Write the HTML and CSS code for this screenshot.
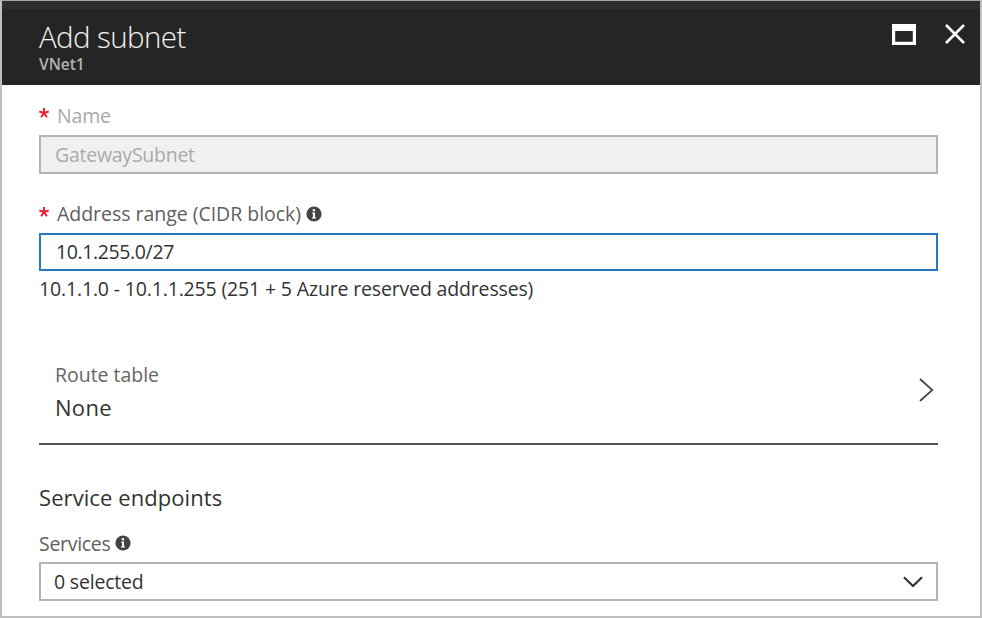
FILE: index.html
```
<!DOCTYPE html>
<html lang="en">
<head>
<meta charset="utf-8">
<title>Add subnet</title>
<link rel="stylesheet" href="styles.css">
</head>
<body>
<main class="blade">
  <header class="header">
    <div>
      <h1 class="title">Add subnet</h1>
      <div class="subtitle">VNet1</div>
    </div>
    <div class="actions">
      <svg width="24" height="21" viewBox="0 0 24 21"><path fill="#fff" fill-rule="evenodd" d="M0 0H24V21H0ZM3.2 7V17.8H20.8V7Z"/></svg>
      <svg width="20" height="20" viewBox="0 0 20 20"><path d="M1 1L19 19M19 1L1 19" stroke="#fff" stroke-width="2.6"/></svg>
    </div>
  </header>
  <section class="form">
    <div class="label muted"><svg class="star" width="10" height="10" viewBox="0 0 10 10"><path d="M5 5V0M5 5L.3 3.5M5 5L9.7 3.5M5 5L2.1 9.3M5 5L7.9 9.3"/></svg><span class="t-name">Name</span></div>
    <div class="input disabled"><span class="t-gateway">GatewaySubnet</span></div>
    <div class="label address"><svg class="star" width="10" height="10" viewBox="0 0 10 10"><path d="M5 5V0M5 5L.3 3.5M5 5L9.7 3.5M5 5L2.1 9.3M5 5L7.9 9.3"/></svg><span class="t-address">Address range (CIDR block)</span><svg class="info" width="16" height="16" viewBox="0 0 16 16"><circle cx="8" cy="8" r="7.6" fill="#444"/><path d="M6.2 6.5H9V11.2H10V12.5H6V11.2H7V7.8H6.2ZM6.7 3.3H9.1V5.3H6.7Z" fill="#fff"/></svg></div>
    <div class="input focused"><span class="t-range">10.1.255.0/27</span></div>
    <div class="hint"><span class="t-hint">10.1.1.0 - 10.1.1.255 (251 + 5 Azure reserved addresses)</span></div>
    <div class="route">
      <div>
        <div class="route-label"><span class="t-route">Route table</span></div>
        <div class="route-value"><span class="t-none">None</span></div>
      </div>
      <svg class="chevron" width="15" height="24" viewBox="0 0 15 24"><path d="M1 1L13.3 12L1 23" fill="none" stroke="#444" stroke-width="1.7"/></svg>
    </div>
    <h2 class="heading"><span class="t-endpoints">Service endpoints</span></h2>
    <div class="label services"><span class="t-services">Services</span><svg class="info" width="16" height="16" viewBox="0 0 16 16"><circle cx="8" cy="8" r="7.6" fill="#444"/><path d="M6.2 6.5H9V11.2H10V12.5H6V11.2H7V7.8H6.2ZM6.7 3.3H9.1V5.3H6.7Z" fill="#fff"/></svg></div>
    <div class="input select"><span class="t-selected">0 selected</span><svg width="20" height="12" viewBox="0 0 20 12"><path d="M1 1.2L10 10L19 1.2" fill="none" stroke="#333" stroke-width="2.2"/></svg></div>
  </section>
</main>
</body>
</html>
```
FILE: styles.css
```
* { box-sizing: border-box; }
body {
  margin: 0;
  font-family: "Open Sans", "Noto Sans", sans-serif;
  font-size: 19.5px;
  line-height: 24px;
  color: #333;
  white-space: nowrap;
}
.blade {
  height: 618px;
  border: 2px solid #bfbfbf;
  border-top: 1px solid #a8a8a8;
  background: #fff;
}
.header {
  height: 84px;
  padding: 10px 15px 0 37px;
  border-top: 8px solid #2e2e2e;
  background: #252525;
  display: flex;
  justify-content: space-between;
}
.title {
  margin: 0;
  font-size: 29.5px;
  font-weight: 300;
  line-height: 35px;
  color: #f2f2f2;
  letter-spacing: -0.6px;
}
.subtitle {
  font-size: 15.5px;
  font-weight: 600;
  line-height: 21px;
  color: #b3b3b3;
}
.actions { display: flex; gap: 29px; padding-top: 5px; }
.form { padding: 19px 42px 0 37px; }
.label { display: flex; align-items: center; height: 24px; color: #606060; }
.label.muted { color: #a9a9a9; }
.star { margin: -7px 8px 0 0; fill: none; stroke: #ee1c2e; stroke-width: 1.9; }
.info { margin: -2px 0 0 5px; }
.input {
  display: flex;
  align-items: center;
  height: 39px;
  padding: 0 15px;
  border: 2px solid #b4b4b4;
}
.disabled { margin-top: 7px; padding-left: 14px; background: #f0f0f0; color: #aaa; }
.address { margin-top: 28px; }
.address .star { margin-top: -5px; }
.address .info { margin-top: 0; }
.focused { height: 38px; margin-top: 7px; border-color: #2678c5; }
.hint { margin-top: 6px; }
.route {
  display: flex;
  justify-content: space-between;
  height: 82px;
  margin-top: 62px;
  padding: 0 4px 0 16px;
  border-bottom: 2px solid #555;
}
.route-label { color: #666; }
.route-value { margin-top: 6px; font-size: 22px; line-height: 28px; }
.chevron { margin-top: 15px; }
.heading { margin: 38px 0 0; font-size: 22px; font-weight: 400; line-height: 28px; }
.services { margin-top: 21px; }
.select { justify-content: space-between; margin-top: 6px; padding: 0 13px; }
.t-name { letter-spacing: -0.15px; }
.t-gateway { letter-spacing: -0.25px; }
.t-address, .t-route { letter-spacing: -0.03px; }
.t-range { letter-spacing: -0.38px; }
.t-hint { letter-spacing: -0.16px; }
.t-none { letter-spacing: 0.3px; }
.t-endpoints { letter-spacing: 0.08px; }
.t-services { letter-spacing: -0.3px; }
.t-selected { letter-spacing: -0.2px; }
```
